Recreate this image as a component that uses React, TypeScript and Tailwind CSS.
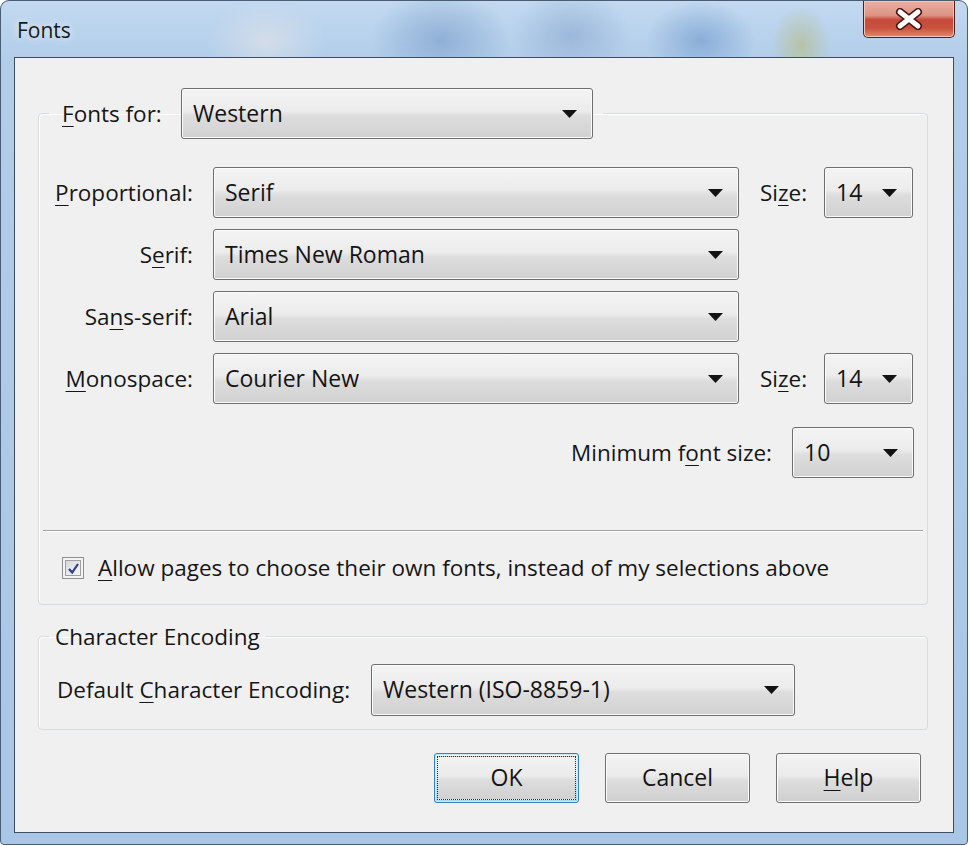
import React from "react";

function Arrow() {
  return (
    <svg width="15" height="8" viewBox="0 0 15 8" className="shrink-0">
      <path d="M0 0H15L7.5 8Z" fill="#121212" />
    </svg>
  );
}

function Combo({ value, className }: { value: string; className: string }) {
  return (
    <div
      className={
        "flex shrink-0 items-center justify-between rounded-[3px] border border-[#6e6e6e] bg-[linear-gradient(#f4f4f4_0%,#ececec_45%,#dddddd_55%,#d1d1d1_100%)] pl-[11px] pr-[15px] text-[23px] leading-none whitespace-nowrap text-[#141414] shadow-[inset_0_0_0_1px_#fbfbfb] " +
        className
      }
    >
      <span>{value}</span>
      <Arrow />
    </div>
  );
}

function Key({ k }: { k: string }) {
  return <u className="underline decoration-1 underline-offset-[4px]">{k}</u>;
}

function Button({ children, focused }: { children: React.ReactNode; focused?: boolean }) {
  return (
    <div
      className={
        focused
          ? "flex h-[50px] w-[145px] rounded-[3px] border border-[#3c7fb1] bg-[linear-gradient(#eaf6fd_0%,#d9f0fc_45%,#bee6fd_55%,#a7d9f5_100%)] p-[2px] shadow-[inset_0_0_0_1px_#c7ebfc]"
          : "flex h-[50px] w-[145px] items-center justify-center rounded-[3px] border border-[#707070] bg-[linear-gradient(#f3f3f3_0%,#ebebeb_45%,#dddddd_55%,#cfcfcf_100%)] text-[23px] text-[#141414] shadow-[inset_0_0_0_1px_#fcfcfc]"
      }
    >
      {focused ? (
        <div className="flex flex-1 items-center justify-center border border-dotted border-[#2a2a2a] bg-[linear-gradient(#f2f2f2_0%,#ebebeb_45%,#dddddd_55%,#d1d1d1_100%)] text-[23px] text-[#141414]">
          {children}
        </div>
      ) : (
        children
      )}
    </div>
  );
}

export default function App() {
  return (
    <div className="h-[846px] w-[970px] bg-white font-['Open_Sans',sans-serif] text-[#161616]">
      <div className="flex h-[845px] w-[968px] flex-col rounded-t-[9px] rounded-b-[4px] border border-[#4a5d73] bg-[radial-gradient(ellipse_60px_40px_at_265px_40px,#d3dde8,transparent),radial-gradient(ellipse_70px_50px_at_440px_40px,#8fb0d6,transparent),radial-gradient(ellipse_60px_45px_at_570px_35px,#9cb8da,transparent),radial-gradient(ellipse_55px_40px_at_700px_40px,#8aaed8,transparent),radial-gradient(ellipse_30px_40px_at_800px_45px,#b7c3a6,transparent),linear-gradient(#c2d9f0,#b2cdea_60px,#a9c6e6_100%)]">
        {/* title bar */}
        <div className="flex h-[56px] items-start justify-between">
          <div className="pl-[16px] pt-[14px] text-[21px] leading-[30px] text-[#1a1a1a] [text-shadow:0_0_8px_#ffffff]">
            Fonts
          </div>
          <div className="mr-[12px] flex h-[37px] w-[92px] items-center justify-center rounded-b-[5px] border border-t-0 border-[#52201c] bg-[linear-gradient(#eab0a2_0%,#dc9483_40%,#c64a3b_52%,#c9523f_75%,#e08a6c_100%)] shadow-[inset_0_0_0_1px_#f2c6bb]">
            <svg width="28" height="22" viewBox="0 0 28 22">
              <path d="M5 4L23 18M23 4L5 18" stroke="#4a1512" strokeWidth="8" strokeLinecap="round" />
              <path d="M5 4L23 18M23 4L5 18" stroke="#ffffff" strokeWidth="5" strokeLinecap="round" />
            </svg>
          </div>
        </div>

        {/* client area */}
        <div className="mx-[13px] flex h-[776px] flex-col border border-[#3d4e62] bg-[#f0f0f0] text-[22.5px] whitespace-nowrap">
          <fieldset className="ml-[23px] mr-[25px] mt-[30px] rounded-[4px] border border-[#d3dce2] shadow-[inset_1px_1px_0_#ffffff]">
            <legend className="ml-[10px] pl-[13px] pr-[10px]">
              <div className="flex items-center">
                <span className="w-[119px]">
                  <Key k="F" />
                  onts for:
                </span>
                <Combo value="Western" className="h-[51px] w-[412px]" />
              </div>
            </legend>

            <div className="mt-[28px] flex flex-col gap-[11px]">
              <div className="flex items-center">
                <span className="w-[154px] text-right">
                  <Key k="P" />
                  roportional:
                </span>
                <Combo value="Serif" className="ml-[20px] h-[51px] w-[526px]" />
                <span className="ml-[21px] w-[64px]">
                  Si
                  <Key k="z" />
                  e:
                </span>
                <Combo value="14" className="h-[51px] w-[89px]" />
              </div>
              <div className="flex items-center">
                <span className="w-[154px] text-right">
                  S
                  <Key k="e" />
                  rif:
                </span>
                <Combo value="Times New Roman" className="ml-[20px] h-[51px] w-[526px]" />
              </div>
              <div className="flex items-center">
                <span className="w-[154px] text-right">
                  Sa
                  <Key k="n" />
                  s-serif:
                </span>
                <Combo value="Arial" className="ml-[20px] h-[51px] w-[526px]" />
              </div>
              <div className="flex items-center">
                <span className="w-[154px] text-right">
                  <Key k="M" />
                  onospace:
                </span>
                <Combo value="Courier New" className="ml-[20px] h-[51px] w-[526px]" />
                <span className="ml-[21px] w-[64px]">
                  Si
                  <Key k="z" />
                  e:
                </span>
                <Combo value="14" className="h-[51px] w-[89px]" />
              </div>
            </div>

            <div className="mt-[23px] flex items-center justify-end pr-[13px]">
              <span>
                Minimum f<Key k="o" />
                nt size:
              </span>
              <Combo value="10" className="ml-[20px] h-[51px] w-[122px]" />
            </div>

            <div className="mx-[4px] mt-[52px] h-[2px] border-t border-b border-t-[#a3a3a3] border-b-[#ffffff]" />

            <div className="mt-[25px] flex items-center pb-[24px] pl-[23px]">
              <div className="flex h-[22px] w-[22px] items-center justify-center border border-[#8e8f8f] bg-[#f4f4f4]">
                <div className="flex h-[16px] w-[16px] items-center justify-center border border-[#9aa0a6] bg-[linear-gradient(135deg,#d8d8d8,#f7f7f7)]">
                  <svg width="13" height="13" viewBox="0 0 13 13">
                    <path d="M2 7L5.2 10.5L11 2" fill="none" stroke="#2c3e8c" strokeWidth="2.2" />
                  </svg>
                </div>
              </div>
              <span className="ml-[14px] leading-none">
                <Key k="A" />
                llow pages to choose their own fonts, instead of my selections above
              </span>
            </div>
          </fieldset>

          <fieldset className="ml-[23px] mr-[25px] mt-[17px] rounded-[4px] border border-[#d3dce2] pb-[13px] shadow-[inset_1px_1px_0_#ffffff]">
            <legend className="ml-[10px] px-[6px] leading-[30px]">Character Encoding</legend>
            <div className="mt-[12px] flex items-center pl-[18px]">
              <span className="w-[294px]">
                Default <Key k="C" />
                haracter Encoding:
              </span>
              <Combo value="Western (ISO-8859-1)" className="ml-[20px] h-[52px] w-[424px]" />
            </div>
          </fieldset>

          <div className="mt-[23px] flex justify-end gap-[26px] pr-[32px]">
            <Button focused>OK</Button>
            <Button>Cancel</Button>
            <Button>
              <span>
                <Key k="H" />
                elp
              </span>
            </Button>
          </div>
        </div>
      </div>
    </div>
  );
}
